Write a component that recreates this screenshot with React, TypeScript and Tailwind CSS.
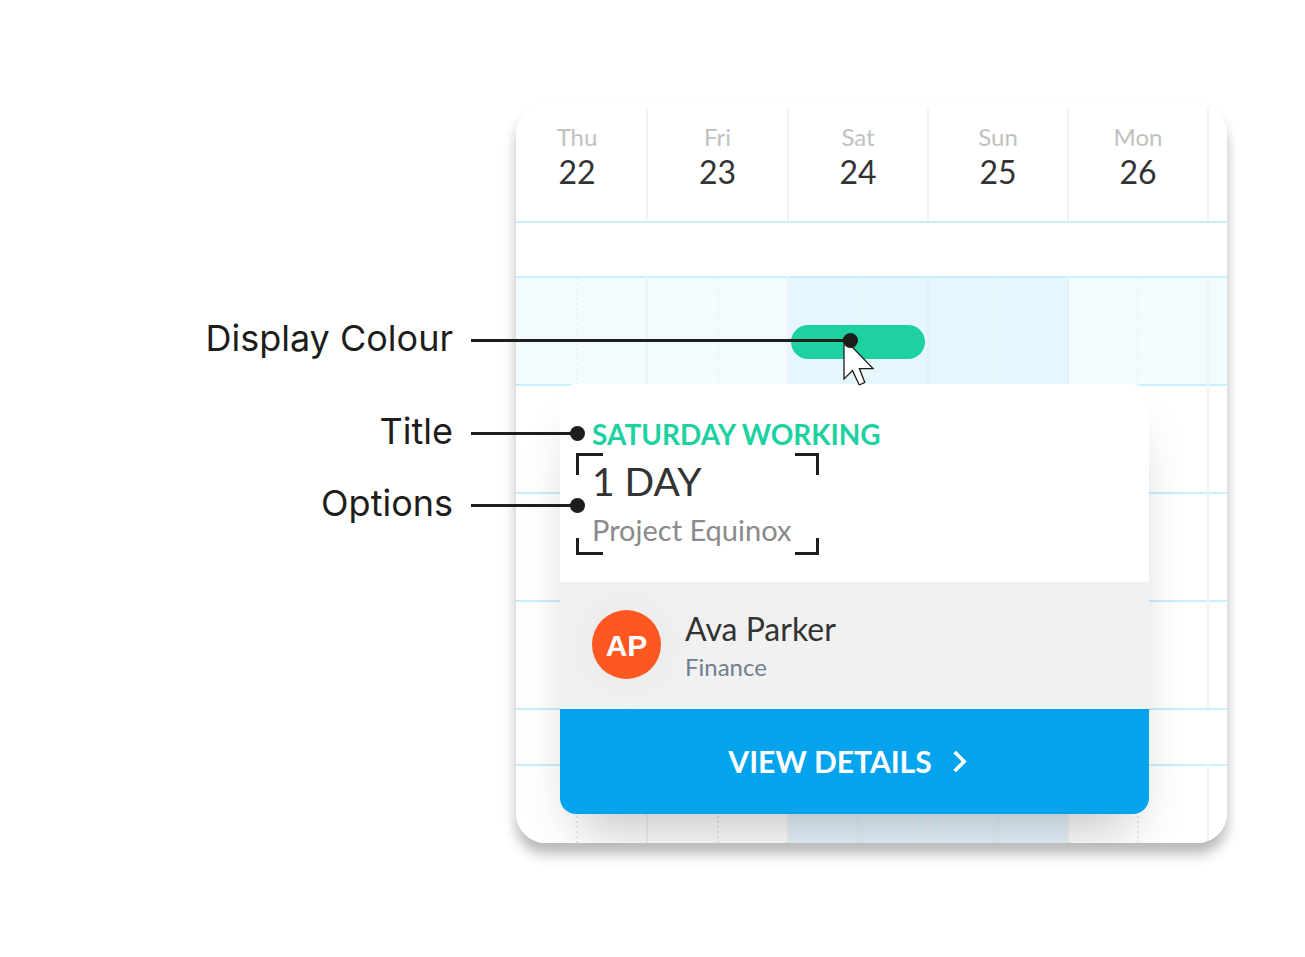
import React from 'react';

type Day = { name: string; date: string; weekend: boolean };

const days: Day[] = [
  { name: 'Thu', date: '22', weekend: false },
  { name: 'Fri', date: '23', weekend: false },
  { name: 'Sat', date: '24', weekend: true },
  { name: 'Sun', date: '25', weekend: true },
  { name: 'Mon', date: '26', weekend: false },
];

const columns = 'grid grid-cols-[132fr_141fr_140fr_140fr_140fr_18fr]';

function Cursor() {
  return (
    <svg className="absolute left-[52px] top-[12px]" width="34" height="50" viewBox="0 0 34 50" aria-hidden="true">
      <path
        d="M1 1.5V42L9.5 33.6L16.3 48L21.8 45.4L16.4 31.6H30Z"
        fill="#fff"
        stroke="#1d1d1b"
        strokeWidth="1.3"
      />
    </svg>
  );
}

function HalfDay({ tinted, first }: { tinted: boolean; first: boolean }) {
  const tone = tinted
    ? 'bg-[repeating-linear-gradient(to_bottom,#ebf2f5_0_2px,transparent_2px_5px)]'
    : 'bg-[repeating-linear-gradient(to_bottom,#e9e9e9_0_2px,transparent_2px_5px)]';
  return (
    <div className={`flex h-full justify-center ${first ? 'pr-2' : ''}`}>
      <div className={`w-[2px] ${tone}`} />
    </div>
  );
}

function Row({ height, active = false }: { height: string; active?: boolean }) {
  const base = active ? 'bg-[#f3fbff]' : 'bg-white';
  return (
    <div className={`${columns} ${height}`}>
      {days.map((day, i) => {
        const activeLine = day.weekend ? 'border-[#e1f1f8]' : 'border-[#edf4f7]';
        return (
          <div key={day.name} className={`border-r-2 ${active ? activeLine : 'border-[#f2f2f2]'}`}>
            <div className={`relative h-full border-t-2 border-[#c9eefe] ${day.weekend ? 'bg-[#e5f6fd]' : base}`}>
              <HalfDay tinted={active} first={i === 0} />
              {active && day.name === 'Sat' && (
                <div className="absolute inset-x-[2px] top-[47px] z-10 h-[34px] rounded-full bg-[#1dd1a1]">
                  <Cursor />
                </div>
              )}
            </div>
          </div>
        );
      })}
      <div className={`border-t-2 border-[#c9eefe] ${base}`} />
    </div>
  );
}

function Label({ text, long = false }: { text: string; long?: boolean }) {
  return (
    <div className="relative text-right text-[36px] leading-[40px]">
      {text}
      <div
        className={`absolute left-full top-[15px] ml-[18px] flex h-[15px] items-center ${long ? 'w-[387px]' : 'w-[114px]'}`}
      >
        <div className="h-[3px] flex-1 bg-[#1d1d1b]" />
        <div className="-ml-px size-[15px] rounded-full bg-[#1d1d1b]" />
      </div>
    </div>
  );
}

function Brackets() {
  return (
    <>
      <span className="absolute left-0 top-0 h-[22px] w-[27px] border-l-[3px] border-t-[3px] border-[#1d1d1b]" />
      <span className="absolute right-0 top-0 h-[22px] w-[24px] border-r-[3px] border-t-[3px] border-[#1d1d1b]" />
      <span className="absolute bottom-0 left-0 h-[17px] w-[27px] border-b-[3px] border-l-[3px] border-[#1d1d1b]" />
      <span className="absolute bottom-0 right-0 h-[17px] w-[24px] border-b-[3px] border-r-[3px] border-[#1d1d1b]" />
    </>
  );
}

function Popover() {
  return (
    <article className="absolute left-[44px] right-[78px] top-[280px] z-0 rounded-2xl bg-white shadow-[0_32px_50px_-18px_rgba(0,0,0,0.24)]">
      <div className="px-8 pb-[27px] pt-[34px]">
        <h2 className="text-[28px] font-bold leading-[32px] text-[#1dd1a1]">SATURDAY WORKING</h2>
        <div className="relative -ml-4 mt-[3px] w-[243px] pb-[7px] pl-4 pt-1">
          <Brackets />
          <p className="text-[39px] leading-[48px] text-[#333]">1 DAY</p>
          <p className="mt-[7px] whitespace-nowrap text-[29px] leading-[36px] text-[#8a8a8a]">Project Equinox</p>
        </div>
      </div>
      <div className="flex items-start gap-6 bg-[#f1f1f1] px-8 pb-[25px] pt-[26px]">
        <div className="mt-[2px] flex size-[69px] items-center justify-center rounded-full bg-[#ff5722] pt-[2px] font-['Liberation_Sans'] text-[30px] font-bold text-white shadow-[0_0_50px_rgba(0,0,0,0.06)]">
          AP
        </div>
        <div>
          <p className="text-[32px] leading-[42px] text-[#333]">Ava Parker</p>
          <p className="text-[24px] leading-[34px] text-[#708090]">Finance</p>
        </div>
      </div>
      <button
        type="button"
        className="flex h-[105px] w-full items-center justify-center gap-[6px] rounded-b-2xl bg-[#03a4ed] text-[30px] font-bold text-white"
      >
        VIEW DETAILS
        <svg width="43" height="43" viewBox="0 0 24 24" fill="currentColor" aria-hidden="true">
          <path d="M10 6L8.59 7.41 13.17 12l-4.58 4.59L10 18l6-6z" />
        </svg>
      </button>
    </article>
  );
}

export default function App() {
  return (
    <main className="flex min-h-screen items-start bg-white pt-[104px] text-[#1d1d1b]">
      <section className="relative z-20 w-[453px] shrink-0 pt-[214px] font-['Inter',sans-serif]">
        <Label text="Display Colour" long />
        <div className="h-[53px]" />
        <Label text="Title" />
        <div className="h-8" />
        <Label text="Options" />
      </section>
      <section className="relative z-0 ml-[63px] mr-[78px] flex-1 rounded-[30px] font-['Lato',sans-serif] shadow-[0_11px_13px_rgba(0,0,0,0.28)]">
        <div className="relative overflow-hidden rounded-[30px] bg-white pt-[4px]">
          <header className={`${columns} h-[113px]`}>
            {days.map((day, i) => (
              <div
                key={day.name}
                className={`border-r-2 border-[#f2f2f2] pt-[15px] text-center ${i === 0 ? 'pr-2' : ''}`}
              >
                <div className="text-[24px] leading-[28px] text-[#c1c1c1]">{day.name}</div>
                <div className="text-[32px] leading-[42px] text-[#333]">{day.date}</div>
              </div>
            ))}
          </header>
          <div className="h-[55px] border-t-2 border-[#c9eefe]" />
          <div className="relative z-10">
            <Row height="h-[108px]" active />
          </div>
          <Row height="h-[108px]" />
          <Row height="h-[108px]" />
          <Row height="h-[108px]" />
          <div className="h-[56px] border-t-2 border-[#c9eefe]" />
          <div className="relative">
            <Row height="h-[79px]" />
          </div>
          <Popover />
        </div>
      </section>
    </main>
  );
}
